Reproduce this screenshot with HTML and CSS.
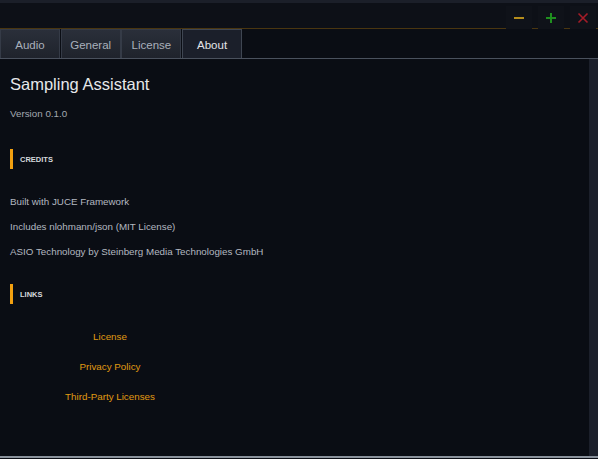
FILE: index.html
```html
<!DOCTYPE html>
<html>
<head>
<meta charset="utf-8">
<link rel="stylesheet" href="styles.css">
</head>
<body>
<div class="app">
  <div class="topstrip"></div>
  <div class="titlebar">
    <div class="wbtn">
      <svg width="26" height="22" viewBox="0 0 26 22"><rect x="8" y="11" width="10" height="2" fill="#b58d1c"/></svg>
    </div>
    <div class="wbtn">
      <svg width="26" height="22" viewBox="0 0 26 22"><rect x="8" y="11" width="10" height="2" fill="#1f8f1f"/><rect x="12" y="7" width="2" height="10" fill="#1f8f1f"/></svg>
    </div>
    <div class="wbtn">
      <svg width="26" height="22" viewBox="0 0 26 22"><path d="M8.5 7.5 L17.5 16.5 M17.5 7.5 L8.5 16.5" stroke="#a51c28" stroke-width="1.6" fill="none"/></svg>
    </div>
  </div>
  <div class="tabs">
    <div class="tab">Audio</div>
    <div class="tab">General</div>
    <div class="tab">License</div>
    <div class="tab active">About</div>
  </div>
  <div class="main">
    <div class="content">
      <h1 class="title">Sampling Assistant</h1>
      <p class="version">Version 0.1.0</p>
      <div class="section">CREDITS</div>
      <div class="credits">
        <p class="line">Built with JUCE Framework</p>
        <p class="line">Includes nlohmann/json (MIT License)</p>
        <p class="line">ASIO Technology by Steinberg Media Technologies GmbH</p>
      </div>
      <div class="section links-head">LINKS</div>
      <div class="links">
        <a class="link">License</a>
        <a class="link">Privacy Policy</a>
        <a class="link">Third-Party Licenses</a>
      </div>
    </div>
    <div class="scrollbar"></div>
  </div>
  <div class="bottomline"></div>
</div>
</body>
</html>
```
FILE: styles.css
```css
* { box-sizing: border-box; }
html, body { margin: 0; padding: 0; }
body {
  background: #0a0d14;
  font-family: "Liberation Sans", Arial, sans-serif;
  width: 598px;
  height: 459px;
  overflow: hidden;
}
.app { display: flex; flex-direction: column; height: 459px; }
.topstrip { height: 3px; background: #1b1f29; }
.titlebar {
  height: 26px;
  background: #0d1017;
  border-bottom: 1px solid #4a3610;
  display: flex;
  justify-content: flex-end;
  align-items: flex-end;
  gap: 6px;
  padding-right: 2px;
}
.wbtn {
  width: 26px;
  height: 23px;
  margin-bottom: -1px;
  background: #0f1219;
  display: flex;
}
.tabs {
  height: 30px;
  display: flex;
  gap: 0.7px;
  border-bottom: 1px solid #4a515d;
}
.tab {
  width: 60px;
  height: 29px;
  background: linear-gradient(#2a2f3a, #1f232c);
  border: 1px solid #353b47;
  border-bottom: none;
  color: #a9b0bb;
  font-size: 11.5px;
  display: flex;
  align-items: center;
  justify-content: center;
  padding-top: 1px;
}
.tab.active {
  background: #1b1f2a;
  border-color: #3f4652;
  color: #e2e4e8;
}
.main { flex: 1; display: flex; }
.content { flex: 1; padding-left: 10px; }
.scrollbar { width: 9px; background: #1c202b; }
.bottomline { height: 2px; background: #8a929c; margin-bottom: 1px; }
.title {
  margin: 15px 0 0;
  font-size: 16.5px;
  font-weight: normal;
  line-height: 20px;
  color: #e6e8ea;
}
.version {
  margin: 13px 0 0;
  font-size: 9.8px;
  line-height: 14px;
  color: #a3a8b0;
}
.section {
  margin-top: 28px;
  height: 20px;
  border-left: 3px solid #f2a010;
  padding-left: 7px;
  display: flex;
  align-items: center;
  font-size: 7.5px;
  font-weight: bold;
  color: #d6d9de;
}
.credits { margin-top: 26px; display: flex; flex-direction: column; gap: 11px; }
.line { margin: 0; font-size: 9.8px; line-height: 14px; color: #b3b8c0; }
.links-head { margin-top: 25px; }
.links {
  margin-top: 26px;
  width: 200px;
  display: flex;
  flex-direction: column;
  align-items: center;
  gap: 16px;
}
.link { font-size: 9.8px; line-height: 14px; color: #e09a12; }
```
